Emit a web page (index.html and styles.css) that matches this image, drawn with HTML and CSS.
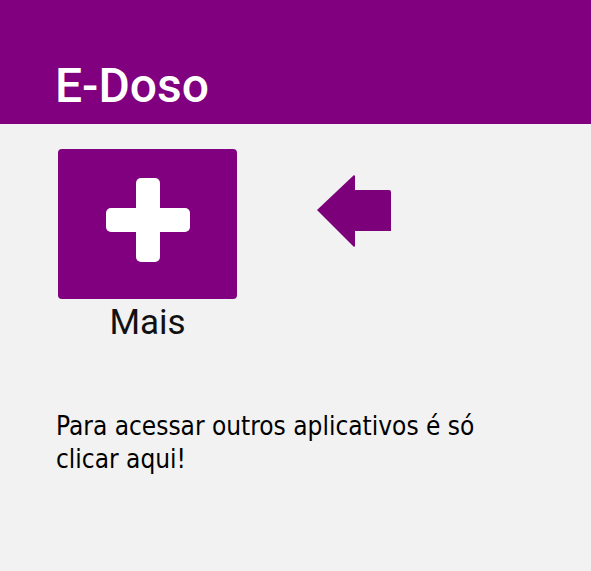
FILE: index.html
```html
<!DOCTYPE html>
<html lang="pt">
<head>
<meta charset="utf-8">
<link rel="stylesheet" href="styles.css">
</head>
<body>
<header class="appbar"><h1 class="title">E-Doso</h1></header>
<main class="content">
  <div class="row">
    <div class="tile">
      <div class="tile-box">
        <svg class="plus" viewBox="0 0 84 84" width="84" height="84">
          <rect x="30" y="0" width="24" height="84" rx="5" fill="#fff"/>
          <rect x="0" y="30" width="84" height="24" rx="5" fill="#fff"/>
        </svg>
      </div>
      <div class="tile-label">Mais</div>
    </div>
    <svg class="arrow" viewBox="0 0 76 74" width="76" height="74">
      <path d="M1 36 L38 1 L39 2 L39 16 L73 16 Q75 16 75 18 L75 57 L39 57 L39 72 L38 73 Z" fill="#7d007b"/>
    </svg>
  </div>
  <p class="hint">Para acessar outros aplicativos é só clicar aqui!</p>
</main>
</body>
</html>
```
FILE: styles.css
```css
html, body {
  margin: 0;
  padding: 0;
  background: #f2f2f2;
}
.appbar {
  background: #800080;
  height: 124px;
  box-sizing: border-box;
  padding: 59px 0 0 55px;
}
.title {
  margin: 0;
  font-family: Roboto, "Noto Sans", sans-serif;
  font-weight: 500;
  font-size: 48px;
  line-height: 54px;
  color: #fff;
}
.content {
  padding: 25px 0 0 56px;
}
.row {
  display: flex;
  align-items: flex-start;
}
.tile {
  display: flex;
  flex-direction: column;
  align-items: center;
  width: 179px;
  margin-left: 2px;
}
.tile-box {
  width: 179px;
  height: 150px;
  background: #800080;
  border-radius: 4px;
  display: flex;
  align-items: center;
  justify-content: center;
}
.plus {
  display: block;
  margin-top: -8px;
}
.tile-label {
  font-family: Roboto, "Noto Sans", sans-serif;
  font-size: 35px;
  line-height: 40px;
  color: #111;
  margin-top: 4px;
}
.arrow {
  display: block;
  margin: 25px 0 0 79px;
}
.hint {
  margin: 67px 0 0 0;
  width: 440px;
  font-family: "DejaVu Sans Condensed", "DejaVu Sans", sans-serif;
  font-size: 26px;
  line-height: 33px;
  color: #000;
}
```
